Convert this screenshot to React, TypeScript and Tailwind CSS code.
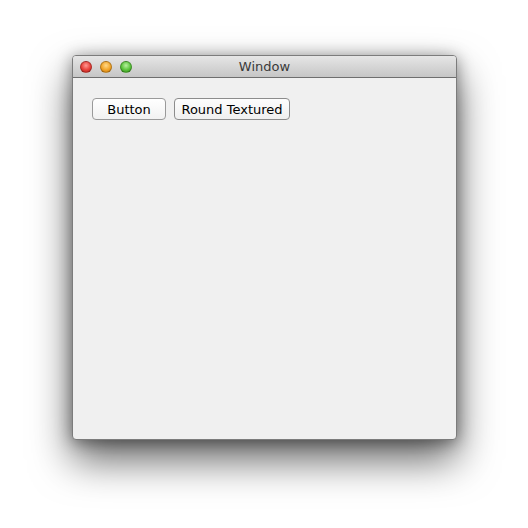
import React from 'react';

const Light: React.FC<{ color: string }> = ({ color }) => (
    <span className={`block w-[12px] h-[12px] rounded-full border border-black/25 ${color}`} />
);

const App: React.FC = () => {
    return (
        <div className="w-[528px] h-[528px] bg-white pt-[55px] pl-[72px]" style={{ fontFamily: '"DejaVu Sans", "Liberation Sans", sans-serif' }}>
            <div className="w-[385px] h-[385px] flex flex-col rounded-[4px] overflow-hidden bg-[#f0f0f0] border border-[#7c7c7c] shadow-[0_20px_40px_rgba(0,0,0,0.6),0_2px_16px_rgba(0,0,0,0.4)]">
                <div className="relative h-[22px] shrink-0 flex items-center px-[7px] gap-[8px] bg-gradient-to-b from-[#e6e6e6] to-[#c6c6c6] border-b border-[#6e6e6e]">
                    <Light color="bg-[radial-gradient(circle_at_50%_35%,#ff9a94,#e8423a_55%,#b01e18)]" />
                    <Light color="bg-[radial-gradient(circle_at_50%_35%,#ffd98a,#f2a52a_55%,#c27408)]" />
                    <Light color="bg-[radial-gradient(circle_at_50%_35%,#b8f0a0,#5cc43c_55%,#2f8a16)]" />
                    <span className="absolute inset-0 flex items-center justify-center text-[13px] text-[#3a3a3a] pointer-events-none">Window</span>
                </div>
                <div className="flex gap-[8px] pt-[20px] pl-[19px]">
                    <button className="w-[74px] h-[22px] rounded-[4px] border border-[#9a9a9a] bg-gradient-to-b from-white to-[#f2f2f2] text-[13px] text-black leading-none">Button</button>
                    <button className="w-[116px] h-[22px] rounded-[4px] border border-[#8c8c8c] bg-gradient-to-b from-[#fdfdfd] to-[#f0f0f0] text-[13px] text-black leading-none">Round Textured</button>
                </div>
            </div>
        </div>
    );
};

export default App;
